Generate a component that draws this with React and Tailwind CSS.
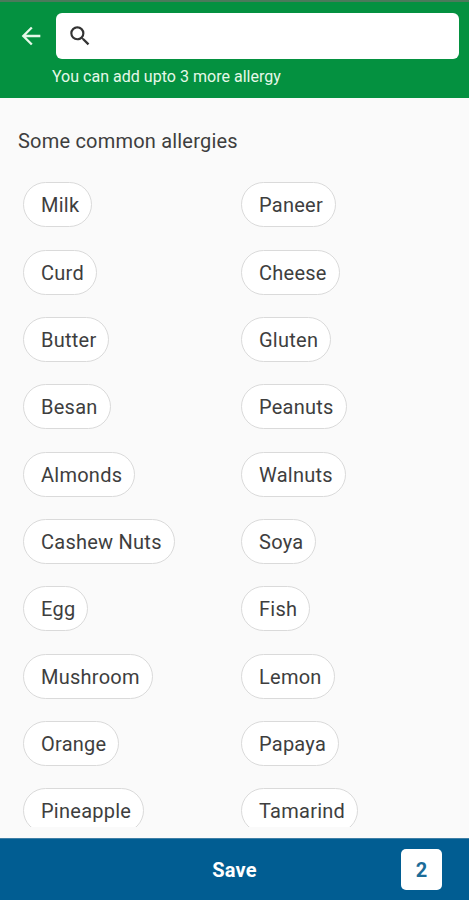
import { MdArrowBack, MdSearch } from "react-icons/md";

const ALLERGIES = [
  "Milk",
  "Paneer",
  "Curd",
  "Cheese",
  "Butter",
  "Gluten",
  "Besan",
  "Peanuts",
  "Almonds",
  "Walnuts",
  "Cashew Nuts",
  "Soya",
  "Egg",
  "Fish",
  "Mushroom",
  "Lemon",
  "Orange",
  "Papaya",
  "Pineapple",
  "Tamarind",
];

export default function App() {
  return (
    <div className="flex h-[900px] w-[469px] flex-col overflow-hidden bg-[#fafafa] font-['Roboto',sans-serif] text-[#3e3e3e]">
      <Header remaining={3} />

      <main className="min-h-0 flex-1 overflow-hidden">
        <h1 className="pt-[29px] pl-[18px] text-[20px] leading-[28px] tracking-[0.2px]">
          Some common allergies
        </h1>
        <div className="mt-[27px] grid h-[645px] auto-rows-[67.35px] grid-cols-[218px_1fr] overflow-hidden pt-[0.3px] pl-[23px]">
          {ALLERGIES.map((name) => (
            <AllergyChip key={name} name={name} />
          ))}
        </div>
      </main>

      <SaveBar count={2} />
    </div>
  );
}

function Header({ remaining }) {
  return (
    <header className="h-[98px] shrink-0 border-t-2 border-[#4b7a5b] bg-[#049140]">
      <div className="flex items-center pt-[11px] pr-[10px] pl-[17px]">
        <button type="button" aria-label="Back" className="text-[#e6f8e8]">
          <MdArrowBack size={28} />
        </button>
        <label className="ml-[11px] flex h-[46px] flex-1 items-center rounded-[6px] bg-white pl-[11px]">
          <MdSearch size={28} className="text-[#333333]" />
          <input aria-label="Search allergies" className="w-full outline-none" />
        </label>
      </div>
      <p className="mt-[6px] pl-[52px] text-[16px] leading-[23px] tracking-[0.02px] text-[#e6f8e8]">
        You can add upto {remaining} more allergy
      </p>
    </header>
  );
}

function AllergyChip({ name }) {
  return (
    <div>
      <button
        type="button"
        className="h-[45px] rounded-full border border-[#dadada] bg-white pt-[2px] pr-3 pl-[17px] text-[20px] leading-[41px] tracking-[0.25px]"
      >
        {name}
      </button>
    </div>
  );
}

function SaveBar({ count }) {
  return (
    <footer className="grid h-[62px] shrink-0 grid-cols-[1fr_auto_1fr] items-center border-t border-[#3f7fa6] bg-[#015d92]">
      <span className="col-start-2 pt-px text-[20px] font-bold tracking-[0.2px] text-white">
        Save
      </span>
      <span className="mr-[27px] flex h-[41px] w-[41px] items-center justify-center justify-self-end rounded-[5px] bg-white pt-px text-[20px] font-bold text-[#1b6c98]">
        {count}
      </span>
    </footer>
  );
}
